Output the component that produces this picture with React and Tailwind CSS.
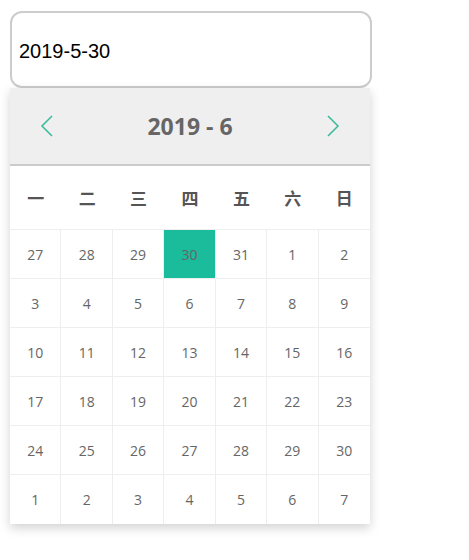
import React from "react";

const weekdays = ["一", "二", "三", "四", "五", "六", "日"];

const days = [
  27, 28, 29, 30, 31, 1, 2,
  3, 4, 5, 6, 7, 8, 9,
  10, 11, 12, 13, 14, 15, 16,
  17, 18, 19, 20, 21, 22, 23,
  24, 25, 26, 27, 28, 29, 30,
  1, 2, 3, 4, 5, 6, 7,
];

const Arrow = ({ dir }) => (
  <svg width="14" height="22" viewBox="0 0 14 22" fill="none">
    <path
      d={dir === "left" ? "M12 1 L2 11 L12 21" : "M2 1 L12 11 L2 21"}
      stroke="#3dbb9b"
      strokeWidth="1.6"
    />
  </svg>
);

export default function App() {
  return (
    <div className="bg-white w-[469px] h-[560px] pt-[11px] pl-[10px]">
      <div className="w-[362px] h-[77px] border-2 border-[#cccccc] rounded-[12px] flex items-center pl-[7px] pt-[2px] font-['Liberation_Sans',Arial,sans-serif] text-[20px] text-black">
        2019-5-30
      </div>
      <div className="w-[360px] shadow-[0_4px_10px_rgba(0,0,0,0.18)] bg-white font-['Open_Sans',sans-serif]">
        <div className="h-[78px] bg-[#efefef] border-b-2 border-[#cccccc] flex items-center justify-between px-[30px]">
          <Arrow dir="left" />
          <span className="text-[23px] font-bold text-[#666666]">2019 - 6</span>
          <Arrow dir="right" />
        </div>
        <div className="grid grid-cols-7 h-[63px] items-center">
          {weekdays.map((w) => (
            <div
              key={w}
              className="text-center text-[17px] font-bold text-[#555555] font-['Noto_Sans_CJK_SC',sans-serif]"
            >
              {w}
            </div>
          ))}
        </div>
        <div className="grid grid-cols-7 border-t border-[#eeeeee]">
          {days.map((d, i) => (
            <div
              key={i}
              className={
                "h-[49px] flex items-center justify-center text-[14px] text-[#666666] border-[#eeeeee] " +
                (i % 7 === 6 ? "" : "border-r ") +
                (i < 35 ? "border-b " : "") +
                (i === 3 ? "bg-[#1abc9c]" : "")
              }
            >
              {d}
            </div>
          ))}
        </div>
      </div>
    </div>
  );
}
